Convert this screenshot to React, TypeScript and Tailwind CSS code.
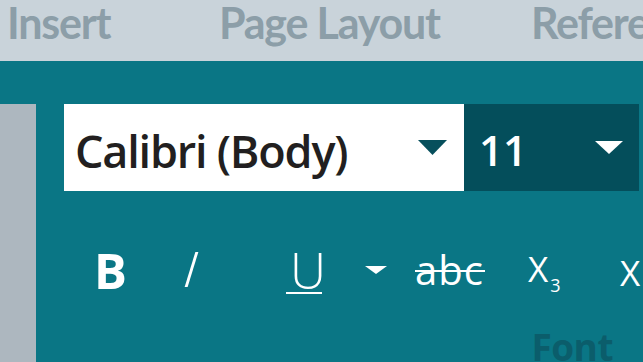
import React from "react";

const sans = "font-['Open_Sans','Noto_Sans',sans-serif]";

function Caret({ className }: { className: string }) {
  return (
    <svg viewBox="0 0 30 16" className={className} fill="currentColor" preserveAspectRatio="none">
      <path d="M0 0h30L15 16z" />
    </svg>
  );
}

export default function App() {
  return (
    <div className={`w-[643px] h-[362px] overflow-hidden flex flex-col bg-[#0a7685] ${sans}`}>
      {/* ribbon tabs */}
      <div className="h-[61px] shrink-0 bg-[#c9d3da] flex items-start text-[#8c9ea8] text-[43px] font-bold font-['Lato',sans-serif] tracking-[-1.2px] leading-[45px] whitespace-nowrap">
        <div className="w-[219px] pl-[7px] shrink-0">Insert</div>
        <div className="w-[312px] shrink-0">Page Layout</div>
        <div className="flex-1 min-w-0 overflow-hidden">References</div>
      </div>

      <div className="flex-1 flex">
        <div className="w-[36px] shrink-0 mt-[43px] bg-[#adb7bf]" />
        <div className="flex-1 pl-[28px] pt-[43px] flex flex-col">
          <div className="flex h-[87px]">
            <div className="w-[400px] bg-white flex items-center justify-between pl-[11px] pr-[17px]">
              <span className="text-[45px] font-semibold text-[#221f20] tracking-[-1.2px] leading-none pt-[5px]">
                Calibri (Body)
              </span>
              <Caret className="w-[29px] h-[15px] text-[#064f5c]" />
            </div>
            <div className="w-[175px] bg-[#044e5b] flex items-center justify-between pl-[15px] pr-[16px]">
              <span className="text-[42px] font-semibold text-white leading-none pt-[5px]">11</span>
              <Caret className="w-[28px] h-[13px] text-white" />
            </div>
          </div>

          {/* formatting buttons */}
          <div className="flex items-center h-[80px] mt-[39px] text-white leading-none whitespace-nowrap">
            <div className="w-[122px] pl-[30px] text-[49px] font-bold">B</div>
            <div className="w-[104px] pl-[4px]">
              <span className="block w-[3px] h-[35px] bg-white skew-x-[-17deg] -mt-[2px]" />
            </div>
            <div className="w-[75px] relative text-[50px] font-light">
              <span>U</span>
              <div className="absolute left-[-4px] top-[47px] w-[36px] h-[2px] bg-white" />
            </div>
            <div className="w-[50px]">
              <Caret className="w-[22px] h-[8px] text-white" />
            </div>
            <div className="w-[113px] relative text-[40px]">
              <span className="tracking-[1px]">abc</span>
              <div className="absolute left-0 top-[20px] w-[70px] h-[2px] bg-white" />
            </div>
            <div className="w-[92px] text-[35px] pt-[4px]">
              X<span className="text-[18px] align-[-10px] ml-[2px]">3</span>
            </div>
            <div className="text-[35px] pt-[4px]">X</div>
          </div>

          <div className="flex justify-end pr-[30px] mt-[18px] text-[37px] font-bold text-[#0b5d6b] tracking-[-0.5px] leading-none">
            Font
          </div>
        </div>
      </div>
    </div>
  );
}
